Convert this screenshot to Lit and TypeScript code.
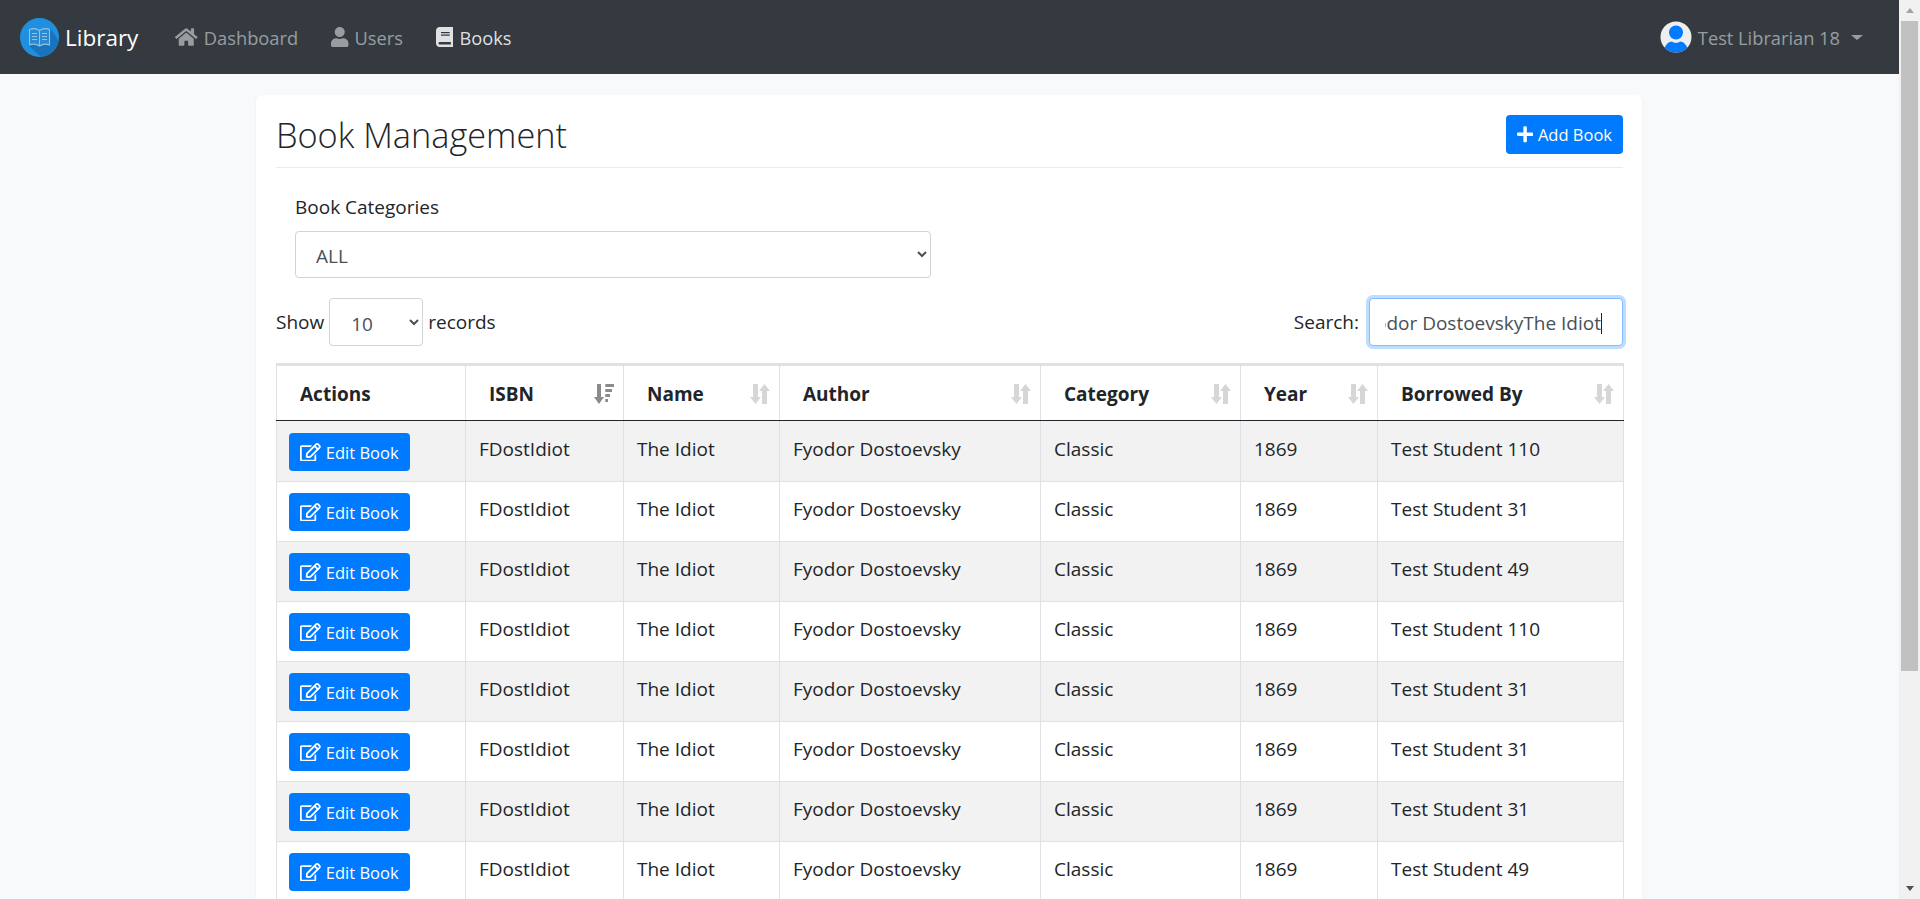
import { LitElement, html, css, svg } from "lit";
import { customElement } from "lit/decorators.js";

const ICONS = {
  home: ["0 0 576 512", "M280.37 148.26L96 300.11V464a16 16 0 0 0 16 16l112.06-.29a16 16 0 0 0 15.92-16V368a16 16 0 0 1 16-16h64a16 16 0 0 1 16 16v95.64a16 16 0 0 0 16 16.05L464 480a16 16 0 0 0 16-16V300L295.67 148.26a12.19 12.19 0 0 0-15.3 0zM571.6 251.47L488 182.56V44.05a12 12 0 0 0-12-12h-56a12 12 0 0 0-12 12v72.61L318.47 43a48 48 0 0 0-61 0L4.34 251.47a12 12 0 0 0-1.6 16.9l25.5 31A12 12 0 0 0 45.15 301l235.22-193.74a12.19 12.19 0 0 1 15.3 0L530.9 301a12 12 0 0 0 16.9-1.6l25.5-31a12 12 0 0 0-1.7-16.93z"],
  user: ["0 0 448 512", "M224 256c70.7 0 128-57.3 128-128S294.7 0 224 0 96 57.3 96 128s57.3 128 128 128zm89.6 32h-16.7c-22.2 10.2-46.9 16-72.9 16s-50.6-5.8-72.9-16h-16.7C60.2 288 0 348.2 0 422.4V464c0 26.5 21.5 48 48 48h352c26.5 0 48-21.5 48-48v-41.6c0-74.2-60.2-134.4-134.4-134.4z"],
  book: ["0 0 448 512", "M448 360V24c0-13.3-10.7-24-24-24H96C43 0 0 43 0 96v320c0 53 43 96 96 96h328c13.3 0 24-10.7 24-24v-16c0-7.5-3.5-14.3-8.9-18.7-4.2-15.4-4.2-59.3 0-74.7 5.4-4.3 8.9-11.1 8.9-18.6zM128 134c0-3.3 2.7-6 6-6h212c3.3 0 6 2.7 6 6v20c0 3.3-2.7 6-6 6H134c-3.3 0-6-2.7-6-6v-20zm0 64c0-3.3 2.7-6 6-6h212c3.3 0 6 2.7 6 6v20c0 3.3-2.7 6-6 6H134c-3.3 0-6-2.7-6-6v-20zm253.4 250H96c-17.7 0-32-14.3-32-32 0-17.6 14.4-32 32-32h285.4c-1.9 17.1-1.9 46.9 0 64z"],
  plus: ["0 0 448 512", "M416 208H272V64c0-17.67-14.33-32-32-32h-32c-17.67 0-32 14.33-32 32v144H32c-17.67 0-32 14.33-32 32v32c0 17.67 14.33 32 32 32h144v144c0 17.67 14.33 32 32 32h32c17.67 0 32-14.33 32-32V304h144c17.67 0 32-14.33 32-32v-32c0-17.67-14.33-32-32-32z"],
  edit: ["0 0 576 512", "M402.3 344.9l32-32c5-5 13.7-1.5 13.7 5.7V464c0 26.5-21.5 48-48 48H48c-26.5 0-48-21.5-48-48V112c0-26.5 21.5-48 48-48h273.5c7.1 0 10.7 8.6 5.7 13.7l-32 32c-1.5 1.5-3.5 2.3-5.7 2.3H48v352h352V350.5c0-2.1.8-4.1 2.3-5.6zm156.6-201.8L296.3 405.7l-90.4 10c-26.2 2.9-48.5-19.2-45.6-45.6l10-90.4L432.9 17.1c22.9-22.9 59.9-22.9 82.7 0l43.2 43.2c22.9 22.9 22.9 60 .1 82.8zM460.1 174L402 115.9 216.2 301.8l-7.3 65.3 65.3-7.3L460.1 174zm64.8-79.7l-43.2-43.2c-4.1-4.1-10.8-4.1-14.8 0L436 82l58.1 58.1 30.9-30.9c4-4.2 4-10.8-.1-14.9z"],
  sortDown: ["0 0 20 20", "M3 0h4v13h3L5 20 0 13h3zM11.300 0H20v3h-8.700zM11.300 5H18v3h-6.700zM11.300 10H16v3h-4.700zM11.300 15H14v3h-2.700z"],
  sortBoth: ["0 0 20 20", "M3 0h5v13h3L5.500 20 0 13h3zM12 7H9L14.500 0 20 7h-3v13h-5z"],
};

function icon(name: keyof typeof ICONS, cls: string) {
  const [box, d] = ICONS[name];
  return html`<svg class=${cls} viewBox=${box} aria-hidden="true"><path d=${d}></path></svg>`;
}

const LOGO = svg`
  <circle cx="19.500" cy="19.500" r="19.500" fill="#1f8fe0"></circle>
  <path d="M8 27 21 38.900C30 38 37 31 38.700 23L31 11z" fill="#1a74bb"></path>
  <path d="M19.500 12.500C16.500 10.500 12 10.500 9.500 11.500V27C12 26 16.500 26 19.500 28 22.500 26 27 26 29.500 27V11.500C27 10.500 22.500 10.500 19.500 12.500ZM19.500 12.500V28M12 15.500h5M12 18.500h5M12 21.500h5M22 15.500h5M22 18.500h5M22 21.500h5" fill="#2b8ad0" stroke="#8fc3e8" stroke-width="1.100"></path>
`;

const AVATAR = svg`
  <defs><clipPath id="avatar-clip"><circle cx="16" cy="16" r="15.500"></circle></clipPath></defs>
  <circle cx="16" cy="16" r="15.500" fill="#eeeeee"></circle>
  <g clip-path="url(#avatar-clip)" fill="#007bff">
    <circle cx="16" cy="11.500" r="7"></circle>
    <path d="M3.500 31C4.500 23.500 9 20.500 12 20.500c1.300 1 2.500 1.400 4 1.400s2.700-.4 4-1.400c3 0 7.500 3 8.500 10.500l-3 2h-19z"></path>
  </g>
`;

const ROWS = ["110", "31", "49", "110", "31", "31", "31", "49"];

const COLUMNS: { label: string; width: number; sort: "sortDown" | "sortBoth" | null }[] = [
  { label: "Actions", width: 189, sort: null },
  { label: "ISBN", width: 158, sort: "sortDown" },
  { label: "Name", width: 156, sort: "sortBoth" },
  { label: "Author", width: 261, sort: "sortBoth" },
  { label: "Category", width: 200, sort: "sortBoth" },
  { label: "Year", width: 137, sort: "sortBoth" },
  { label: "Borrowed By", width: 246, sort: "sortBoth" },
];

@customElement("app-root")
export class AppRoot extends LitElement {
  static styles = css`
    :host {
      display: block;
      font-family: "Open Sans", "Noto Sans", sans-serif;
      font-size: 19px;
      color: #212529;
    }
    * {
      box-sizing: border-box;
    }
    .root {
      display: flex;
      height: 100vh;
      overflow: hidden;
      background: #f8f9fa;
    }
    .page {
      flex: 1;
      min-width: 0;
      overflow: hidden;
    }
    .scrollbar {
      width: 21px;
      flex: none;
      background: #f1f1f1;
      display: flex;
      flex-direction: column;
      align-items: center;
      padding: 0 2px;
    }
    .scroll-up {
      height: 21px;
      width: 100%;
      display: flex;
      align-items: center;
      justify-content: center;
    }
    .scroll-up::before {
      content: "";
      border: 4.500px solid transparent;
      border-top: 0;
      border-bottom: 5px solid #a3a3a3;
    }
    .scroll-thumb {
      height: 650px;
      width: 17px;
      background: #c1c1c1;
    }
    .scroll-space {
      flex: 1;
    }
    .scroll-down {
      height: 21px;
      width: 100%;
      display: flex;
      align-items: center;
      justify-content: center;
    }
    .scroll-down::before {
      content: "";
      border: 4.500px solid transparent;
      border-bottom: 0;
      border-top: 5px solid #505050;
    }

    .navbar {
      height: 74px;
      background: #343a40;
      display: flex;
      align-items: center;
      padding: 0 20px;
    }
    .brand {
      display: flex;
      align-items: center;
      gap: 6px;
      color: #fff;
      font-size: 22.500px;
      margin-right: 37px;
    }
    .brand svg {
      width: 39px;
      height: 39px;
    }
    .nav-link {
      display: flex;
      align-items: center;
      gap: 6px;
      color: rgba(255, 255, 255, 0.5);
      font-size: 18.250px;
      margin-right: 33px;
    }
    .nav-link.active {
      color: rgba(255, 255, 255, 0.85);
    }
    .nav-link svg {
      height: 20px;
      fill: currentColor;
    }
    .user-menu {
      margin-left: auto;
      display: flex;
      align-items: center;
      color: rgba(255, 255, 255, 0.5);
      font-size: 18.250px;
      margin-right: 16px;
    }
    .user-menu svg {
      width: 32px;
      height: 32px;
      margin-right: 6px;
    }
    .caret {
      margin-left: 11px;
      border-top: 5.500px solid currentColor;
      border-left: 6px solid transparent;
      border-right: 6px solid transparent;
    }

    .card {
      width: 1386px;
      margin: 21px 0 0 256px;
      padding: 20px 19px 20px 20px;
      background: #fff;
      border-radius: 6px;
      box-shadow: 0 1px 3px rgba(0, 0, 0, 0.05);
    }
    .title-row {
      display: flex;
      justify-content: space-between;
      align-items: flex-start;
      padding-bottom: 13px;
      border-bottom: 1px solid #e9ecef;
    }
    h2 {
      margin: 0;
      font-size: 34.300px;
      font-weight: 300;
      line-height: 39px;
    }
    .btn {
      display: inline-flex;
      align-items: center;
      gap: 5px;
      height: 38px;
      border: none;
      border-radius: 4px;
      background: #007bff;
      color: #fff;
      font-family: inherit;
      font-size: 16.500px;
      padding: 0 11px;
    }
    .btn svg {
      height: 18.500px;
      fill: currentColor;
    }
    .add-btn {
      height: 39px;
    }
    .category {
      width: 655px;
      margin-top: 27px;
      padding-left: 19px;
    }
    label {
      display: block;
      line-height: 24px;
      margin-bottom: 12px;
    }
    select {
      display: block;
      background: #fff;
      border: 1px solid #ced4da;
      border-radius: 4px;
      color: #495057;
      font: inherit;
    }
    .category select {
      width: 100%;
      height: 47px;
      padding: 2px 16px 0;
    }
    .table-tools {
      display: flex;
      justify-content: space-between;
      align-items: center;
      margin-top: 20px;
      margin-bottom: 17px;
    }
    .length,
    .search {
      display: flex;
      align-items: center;
      gap: 5px;
    }
    .length select {
      width: 94px;
      height: 48px;
      padding: 3px 16px 0 17px;
    }
    .search {
      gap: 10px;
    }
    .search-input {
      width: 254px;
      height: 48px;
      display: flex;
      align-items: center;
      justify-content: flex-end;
      overflow: hidden;
      white-space: nowrap;
      background: #fff;
      border: 1px solid #80bdff;
      border-radius: 4px;
      box-shadow: 0 0 0 3px rgba(0, 123, 255, 0.25);
      color: #495057;
      padding: 2px 20px 0 15px;
    }
    .search-clip {
      display: flex;
      justify-content: flex-end;
      overflow: hidden;
      min-width: 0;
    }
    .search-clip span {
      flex: none;
    }
    .text-caret {
      flex: none;
      width: 1px;
      height: 21px;
      background: #212529;
    }

    table {
      width: 1347px;
      border-collapse: collapse;
      table-layout: fixed;
    }
    th {
      height: 56px;
      padding: 2px 9px 0 23px;
      border: 1px solid #dee2e6;
      border-top: 3px solid #dee2e6;
      border-bottom: 1px solid #212529;
      text-align: left;
      font-weight: 700;
    }
    .th-inner {
      display: flex;
      justify-content: space-between;
      align-items: center;
    }
    .sort {
      width: 20px;
      height: 20px;
      flex: none;
    }
    .sort.sortDown {
      fill: #8b8b8b;
    }
    .sort.sortBoth {
      fill: #d6d6d6;
    }
    td {
      height: 60px;
      padding: 15px 13px 0;
      border: 1px solid #dee2e6;
      vertical-align: top;
      line-height: 24px;
    }
    td.action {
      padding: 11px 12px 0;
    }
    tbody tr:first-child td {
      height: 61px;
      padding-top: 16px;
    }
    tbody tr:first-child td.action {
      padding-top: 12px;
    }
    tbody tr:nth-child(odd) {
      background: #f2f2f2;
    }
  `;

  render() {
    return html`
      <div class="root">
        <div class="page">
          <nav class="navbar">
            <div class="brand"><svg viewBox="0 0 39 39">${LOGO}</svg>Library</div>
            <div class="nav-link">${icon("home", "")}Dashboard</div>
            <div class="nav-link">${icon("user", "")}Users</div>
            <div class="nav-link active">${icon("book", "")}Books</div>
            <div class="user-menu">
              <svg viewBox="0 0 32 32">${AVATAR}</svg>Test Librarian 18<span class="caret"></span>
            </div>
          </nav>
          <main class="card">
            <div class="title-row">
              <h2>Book Management</h2>
              <button class="btn add-btn">${icon("plus", "")}Add Book</button>
            </div>
            <div class="category">
              <label>Book Categories</label>
              <select><option>ALL</option></select>
            </div>
            <div class="table-tools">
              <div class="length">
                Show <select><option>10</option></select> records
              </div>
              <div class="search">
                Search:
                <div class="search-input">
                  <div class="search-clip"><span>Fyodor DostoevskyThe Idiot</span></div>
                  <i class="text-caret"></i>
                </div>
              </div>
            </div>
            <table>
              <colgroup>
                ${COLUMNS.map((c) => html`<col style="width:${c.width}px" />`)}
              </colgroup>
              <thead>
                <tr>
                  ${COLUMNS.map(
                    (c) => html`<th>
                      <div class="th-inner">
                        <span>${c.label}</span>
                        ${c.sort ? icon(c.sort, `sort ${c.sort}`) : ""}
                      </div>
                    </th>`
                  )}
                </tr>
              </thead>
              <tbody>
                ${ROWS.map(
                  (n) => html`<tr>
                    <td class="action"><button class="btn">${icon("edit", "")}Edit Book</button></td>
                    <td>FDostIdiot</td>
                    <td>The Idiot</td>
                    <td>Fyodor Dostoevsky</td>
                    <td>Classic</td>
                    <td>1869</td>
                    <td>Test Student ${n}</td>
                  </tr>`
                )}
              </tbody>
            </table>
          </main>
        </div>
        <div class="scrollbar">
          <div class="scroll-up"></div>
          <div class="scroll-thumb"></div>
          <div class="scroll-space"></div>
          <div class="scroll-down"></div>
        </div>
      </div>
    `;
  }
}
